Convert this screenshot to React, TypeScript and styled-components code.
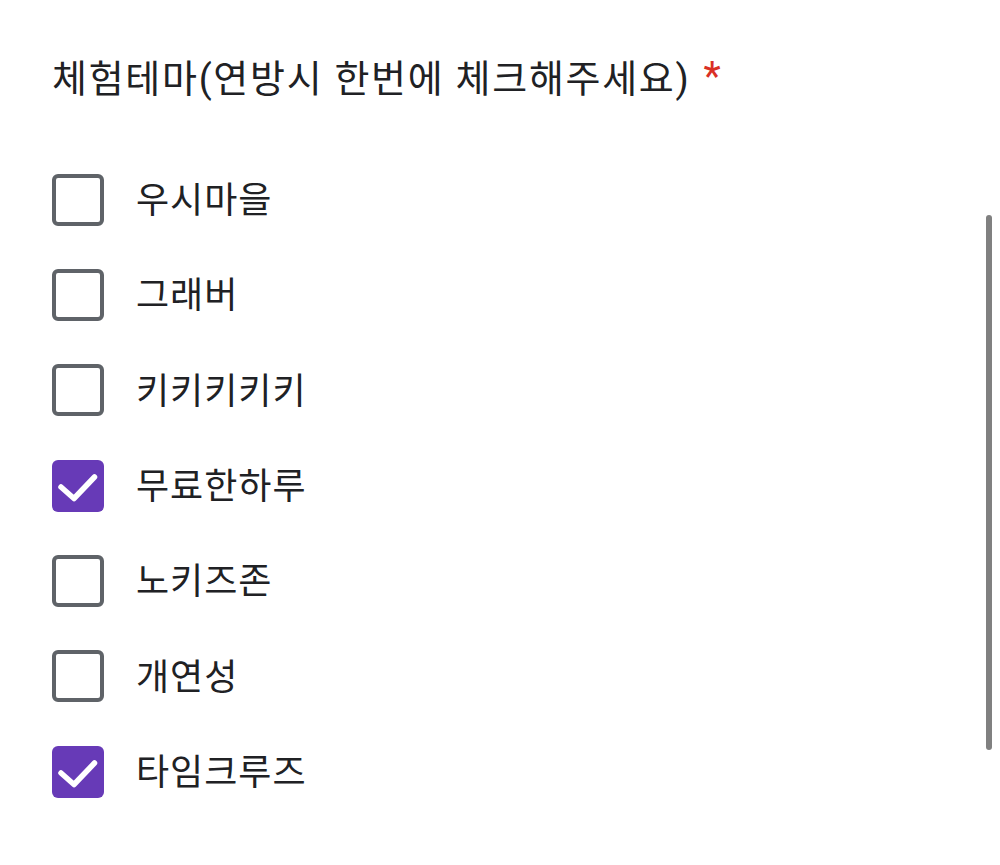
import React, { useState } from 'react';
import styled, { createGlobalStyle } from 'styled-components';

const GlobalStyle = createGlobalStyle`
  html, body {
    margin: 0;
    padding: 0;
    background: #ffffff;
  }
  body {
    font-family: Roboto, "Noto Sans CJK KR", sans-serif;
    color: #202124;
  }
`;

const Page = styled.div`
  position: relative;
  width: 1000px;
  height: 865px;
  overflow: hidden;
  padding: 51px 0 0 52px;
  box-sizing: border-box;
`;

const Title = styled.div`
  display: flex;
  align-items: center;
  font-size: 38px;
  line-height: 56px;
  letter-spacing: 1.7px;
  color: #202124;
`;

const Required = styled.span`
  color: #d93025;
  font-size: 40px;
  margin-left: 13px;
  margin-top: -4px;
`;

const OptionList = styled.div`
  display: flex;
  flex-direction: column;
  margin-top: 45px;
`;

const OptionRow = styled.label`
  display: flex;
  align-items: center;
  gap: 32px;
  height: 95.33px;
  cursor: pointer;
`;

const Box = styled.span<{ $checked: boolean }>`
  display: block;
  width: 52px;
  height: 52px;
  box-sizing: border-box;
  border-radius: 6px;
  border: ${({ $checked }) => ($checked ? 'none' : '4px solid #5f6368')};
  background: ${({ $checked }) => ($checked ? '#673ab7' : 'transparent')};
  flex-shrink: 0;

  svg {
    display: block;
    width: 52px;
    height: 52px;
  }
`;

const OptionText = styled.span`
  font-size: 36px;
  line-height: 50px;
  padding-top: 3px;
  letter-spacing: 1px;
  color: #202124;
`;

const ScrollThumb = styled.div`
  position: absolute;
  top: 215px;
  right: 8px;
  width: 6px;
  height: 535px;
  border-radius: 3px;
  background: #808080;
`;

const OPTIONS = [
  { label: '우시마을', checked: false },
  { label: '그래버', checked: false },
  { label: '키키키키키', checked: false },
  { label: '무료한하루', checked: true },
  { label: '노키즈존', checked: false },
  { label: '개연성', checked: false },
  { label: '타임크루즈', checked: true },
];

function CheckMark() {
  return (
    <svg viewBox="0 0 52 52" fill="none">
      <path d="M9 27l13 11.5L42.5 17" stroke="#ffffff" strokeWidth="5.5" strokeLinecap="round" strokeLinejoin="round" />
    </svg>
  );
}

export default function App() {
  const [values, setValues] = useState(OPTIONS.map((o) => o.checked));

  return (
    <Page>
      <GlobalStyle />
      <Title>
        체험테마(연방시 한번에 체크해주세요)<Required>*</Required>
      </Title>
      <OptionList>
        {OPTIONS.map((opt, i) => (
          <OptionRow
            key={opt.label}
            onClick={() => setValues((v) => v.map((x, j) => (j === i ? !x : x)))}
          >
            <Box $checked={values[i]}>{values[i] && <CheckMark />}</Box>
            <OptionText>{opt.label}</OptionText>
          </OptionRow>
        ))}
      </OptionList>
      <ScrollThumb />
    </Page>
  );
}
